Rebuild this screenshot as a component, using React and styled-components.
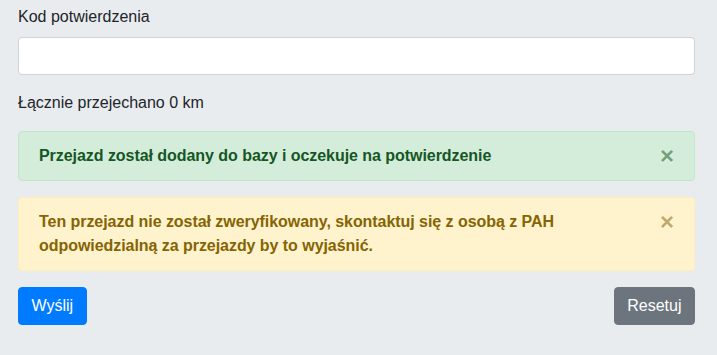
import React from "react";
import styled, { createGlobalStyle } from "styled-components";

const Global = createGlobalStyle`
  html, body { margin: 0; padding: 0; background: #e9ecef; }
  body {
    font-family: "Liberation Sans", Arial, sans-serif;
    font-size: 16px;
    line-height: 1.5;
    color: #212529;
  }
  * { box-sizing: border-box; }
`;

const Page = styled.div`
  padding: 5px 22px 0 18px;
`;

const FormGroup = styled.div`
  margin-bottom: 16px;
`;

const Label = styled.label`
  display: inline-block;
  margin-bottom: 8px;
`;

const Input = styled.input`
  display: block;
  width: 100%;
  height: 38px;
  padding: 6px 12px;
  font: inherit;
  color: #495057;
  background: #fff;
  border: 1px solid #ced4da;
  border-radius: 4px;
  outline: none;
`;

const Text = styled.p`
  margin: 0 0 16px;
`;

const palettes = {
  success: { bg: "#d4edda", border: "#c3e6cb", color: "#155724" },
  warning: { bg: "#fff3cd", border: "#ffeeba", color: "#856404" },
};

const Alert = styled.div`
  position: relative;
  padding: 12px 64px 12px 20px;
  margin-bottom: 16px;
  border: 1px solid ${(p) => palettes[p.$variant].border};
  border-radius: 4px;
  background: ${(p) => palettes[p.$variant].bg};
  color: ${(p) => palettes[p.$variant].color};
  font-weight: 700;
  letter-spacing: -0.05px;
`;

const Close = styled.button`
  position: absolute;
  top: 0;
  right: 0;
  padding: 12px 20px;
  background: transparent;
  border: 0;
  font-family: "Liberation Sans", Arial, sans-serif;
  font-size: 24px;
  font-weight: 700;
  line-height: 1;
  color: inherit;
  opacity: 0.5;
  text-shadow: 0 1px 0 #fff;
  cursor: pointer;
`;

const Actions = styled.div`
  display: flex;
  justify-content: space-between;
`;

const Button = styled.button`
  display: inline-block;
  padding: 6px 12.5px;
  font-family: "Liberation Sans", Arial, sans-serif;
  font-size: 16px;
  line-height: 1.5;
  font-weight: 400;
  color: #fff;
  background: ${(p) => (p.$variant === "primary" ? "#007bff" : "#6c757d")};
  border: 1px solid ${(p) => (p.$variant === "primary" ? "#007bff" : "#6c757d")};
  border-radius: 4px;
  cursor: pointer;
`;

export default function App() {
  return (
    <>
      <Global />
      <Page>
        <FormGroup>
          <Label htmlFor="code">Kod potwierdzenia</Label>
          <Input id="code" type="text" />
        </FormGroup>
        <Text>Łącznie przejechano 0 km</Text>
        <Alert $variant="success">
          Przejazd został dodany do bazy i oczekuje na potwierdzenie
          <Close aria-label="Close">×</Close>
        </Alert>
        <Alert $variant="warning">
          Ten przejazd nie został zweryfikowany, skontaktuj się z osobą z PAH
          odpowiedzialną za przejazdy by to wyjaśnić.
          <Close aria-label="Close">×</Close>
        </Alert>
        <Actions>
          <Button $variant="primary">Wyślij</Button>
          <Button $variant="secondary">Resetuj</Button>
        </Actions>
      </Page>
    </>
  );
}
